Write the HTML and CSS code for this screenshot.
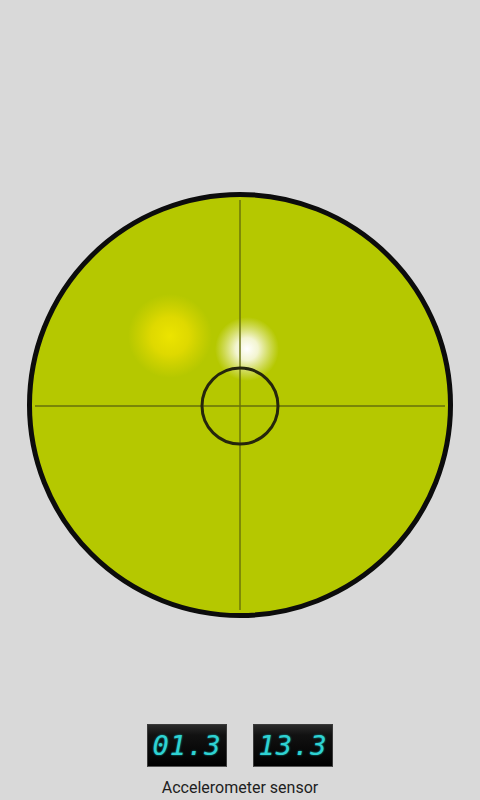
FILE: index.html
```html
<!DOCTYPE html>
<html>
<head>
<meta charset="utf-8">
<link rel="stylesheet" href="styles.css">
</head>
<body>
<div class="screen">
  <div class="gauge">
    <svg width="430" height="430" viewBox="0 0 430 430">
      <defs>
        <radialGradient id="yel" cx="0.5" cy="0.5" r="0.5">
          <stop offset="0" stop-color="#ece400" stop-opacity="1"/>
          <stop offset="0.45" stop-color="#e6dc00" stop-opacity="0.85"/>
          <stop offset="1" stop-color="#e0d800" stop-opacity="0"/>
        </radialGradient>
        <radialGradient id="wht" cx="0.5" cy="0.5" r="0.5">
          <stop offset="0" stop-color="#ffffff" stop-opacity="1"/>
          <stop offset="0.35" stop-color="#fafae8" stop-opacity="0.9"/>
          <stop offset="1" stop-color="#f0f0c0" stop-opacity="0"/>
        </radialGradient>
      </defs>
      <circle cx="215" cy="215" r="210.5" fill="#b5c800" stroke="#0c0c0c" stroke-width="5"/>
      <circle cx="145" cy="146" r="42" fill="url(#yel)"/>
      <circle cx="222" cy="159" r="32" fill="url(#wht)"/>
      <line x1="215" y1="10" x2="215" y2="420" stroke="#66700a" stroke-width="1.4"/>
      <line x1="10" y1="216" x2="420" y2="216" stroke="#66700a" stroke-width="1.4"/>
      <circle cx="215" cy="216" r="38" fill="none" stroke="#25260c" stroke-width="3"/>
    </svg>
  </div>
  <div class="readouts">
    <div class="lcd">01.3</div>
    <div class="lcd">13.3</div>
  </div>
  <div class="label">Accelerometer sensor</div>
</div>
</body>
</html>
```
FILE: styles.css
```css
html, body {
  margin: 0;
  padding: 0;
  background: #d9d9d9;
}
.screen {
  width: 480px;
  height: 800px;
  display: flex;
  flex-direction: column;
  align-items: center;
  font-family: "Roboto", "Liberation Sans", sans-serif;
}
.gauge {
  margin-top: 190px;
  width: 430px;
  height: 430px;
}
.gauge svg {
  display: block;
}
.readouts {
  margin-top: 104px;
  display: flex;
  gap: 26px;
}
.lcd {
  width: 80px;
  height: 43px;
  box-sizing: border-box;
  background: linear-gradient(#2a2a2a 0%, #111 25%, #000 100%);
  border: 1px solid #3a3a3a;
  border-bottom-color: #555;
  color: #2fd2d2;
  font-family: "DejaVu Sans Mono", monospace;
  font-style: italic;
  font-size: 27px;
  line-height: 41px;
  text-align: center;
  letter-spacing: 1px;
  text-shadow: 0 0 2px #1aa;
}
.label {
  margin-top: 11px;
  font-size: 16px;
  color: #1e1e1e;
  line-height: 19px;
}
```
